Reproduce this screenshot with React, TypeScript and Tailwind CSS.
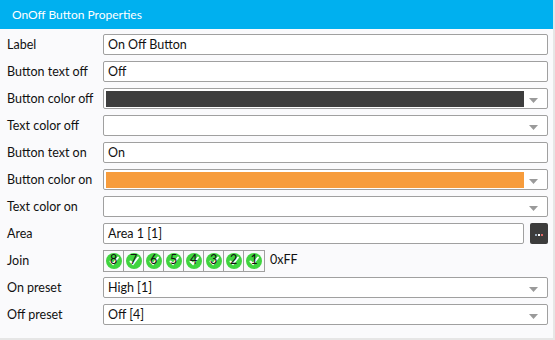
import React from "react";

const font = { fontFamily: 'Lato, "Open Sans", sans-serif' };

function Arrow() {
  return (
    <svg width="9" height="5" viewBox="0 0 9 5" className="absolute right-[9px] top-[9px]">
      <path d="M0 0 H9 L4.5 5 Z" fill="#9a9a9a" />
    </svg>
  );
}

function TextBox({ value }: { value: string }) {
  return (
    <div className="flex-1 h-[21px] border border-[#a0a0a0] rounded-[2px] bg-white flex items-center pl-[4px] pt-[1px] text-[12.5px] text-[#111]">
      {value}
    </div>
  );
}

function Select({ value, swatch }: { value?: string; swatch?: string }) {
  return (
    <div className="relative flex-1 h-[21px] border border-[#a0a0a0] rounded-[2px] bg-white flex items-center pl-[2px] text-[12.5px] text-[#111]">
      {swatch ? (
        <div className="h-[16px] w-[418px]" style={{ background: swatch }} />
      ) : (
        <span className="pl-[2px] pt-[1px]">{value}</span>
      )}
      <Arrow />
    </div>
  );
}

function Row({ label, children }: { label: string; children: React.ReactNode }) {
  return (
    <div className="flex items-center h-[27px]">
      <div className="w-[103px] pl-[7px] pt-[1px] text-[12.5px] text-[#111] shrink-0">{label}</div>
      <div className="flex-1 flex items-center pr-[5px]">{children}</div>
    </div>
  );
}

function JoinCell({ n }: { n: number }) {
  return (
    <div className="w-[20px] h-[20px] border-r border-[#a0a0a0] flex items-center justify-center last:border-r-0">
      <div className="relative w-[16px] h-[16px] rounded-full bg-[#3fd43f] flex items-center justify-center">
        <svg width="16" height="16" viewBox="0 0 16 16" className="absolute inset-0">
          <path d="M4.5 8.5 L7 11 L12 4.5" stroke="#ffffff" strokeWidth="2" fill="none" strokeLinecap="round" />
        </svg>
        <span className="relative text-[12.5px] leading-none text-[#111]">{n}</span>
      </div>
    </div>
  );
}

export default function App() {
  return (
    <div style={font} className="w-[555px] h-[340px] bg-[#e6e6e6] pr-[2px] pb-[2px]">
      <div className="w-full h-full bg-[#fafafc] flex flex-col">
        <div className="h-[29px] bg-[#00b0ef] text-white text-[12px] flex items-center pl-[12px]">
          OnOff Button Properties
        </div>
        <div className="pt-[2px] flex flex-col">
          <Row label="Label"><TextBox value="On Off Button" /></Row>
          <Row label="Button text off"><TextBox value="Off" /></Row>
          <Row label="Button color off"><Select swatch="#3e3e3e" /></Row>
          <Row label="Text color off"><Select value="" /></Row>
          <Row label="Button text on"><TextBox value="On" /></Row>
          <Row label="Button color on"><Select swatch="#f79c3c" /></Row>
          <Row label="Text color on"><Select value="" /></Row>
          <Row label="Area">
            <TextBox value="Area 1 [1]" />
            <div className="ml-[6px] w-[18px] h-[21px] rounded-[2px] bg-[#3c3c3c] flex items-center justify-center">
              <div className="flex gap-[1px] mt-[3px]">
                <div className="w-[2px] h-[2px] bg-[#9ab]" />
                <div className="w-[2px] h-[2px] bg-[#fff]" />
                <div className="w-[2px] h-[2px] bg-[#d66]" />
              </div>
            </div>
          </Row>
          <Row label="Join">
            <div className="flex border border-[#a0a0a0]">
              {[8, 7, 6, 5, 4, 3, 2, 1].map((n) => (
                <JoinCell key={n} n={n} />
              ))}
            </div>
            <span className="ml-[5px] text-[12.5px] text-[#111]">0xFF</span>
          </Row>
          <Row label="On preset"><Select value="High [1]" /></Row>
          <Row label="Off preset"><Select value="Off [4]" /></Row>
        </div>
      </div>
    </div>
  );
}
